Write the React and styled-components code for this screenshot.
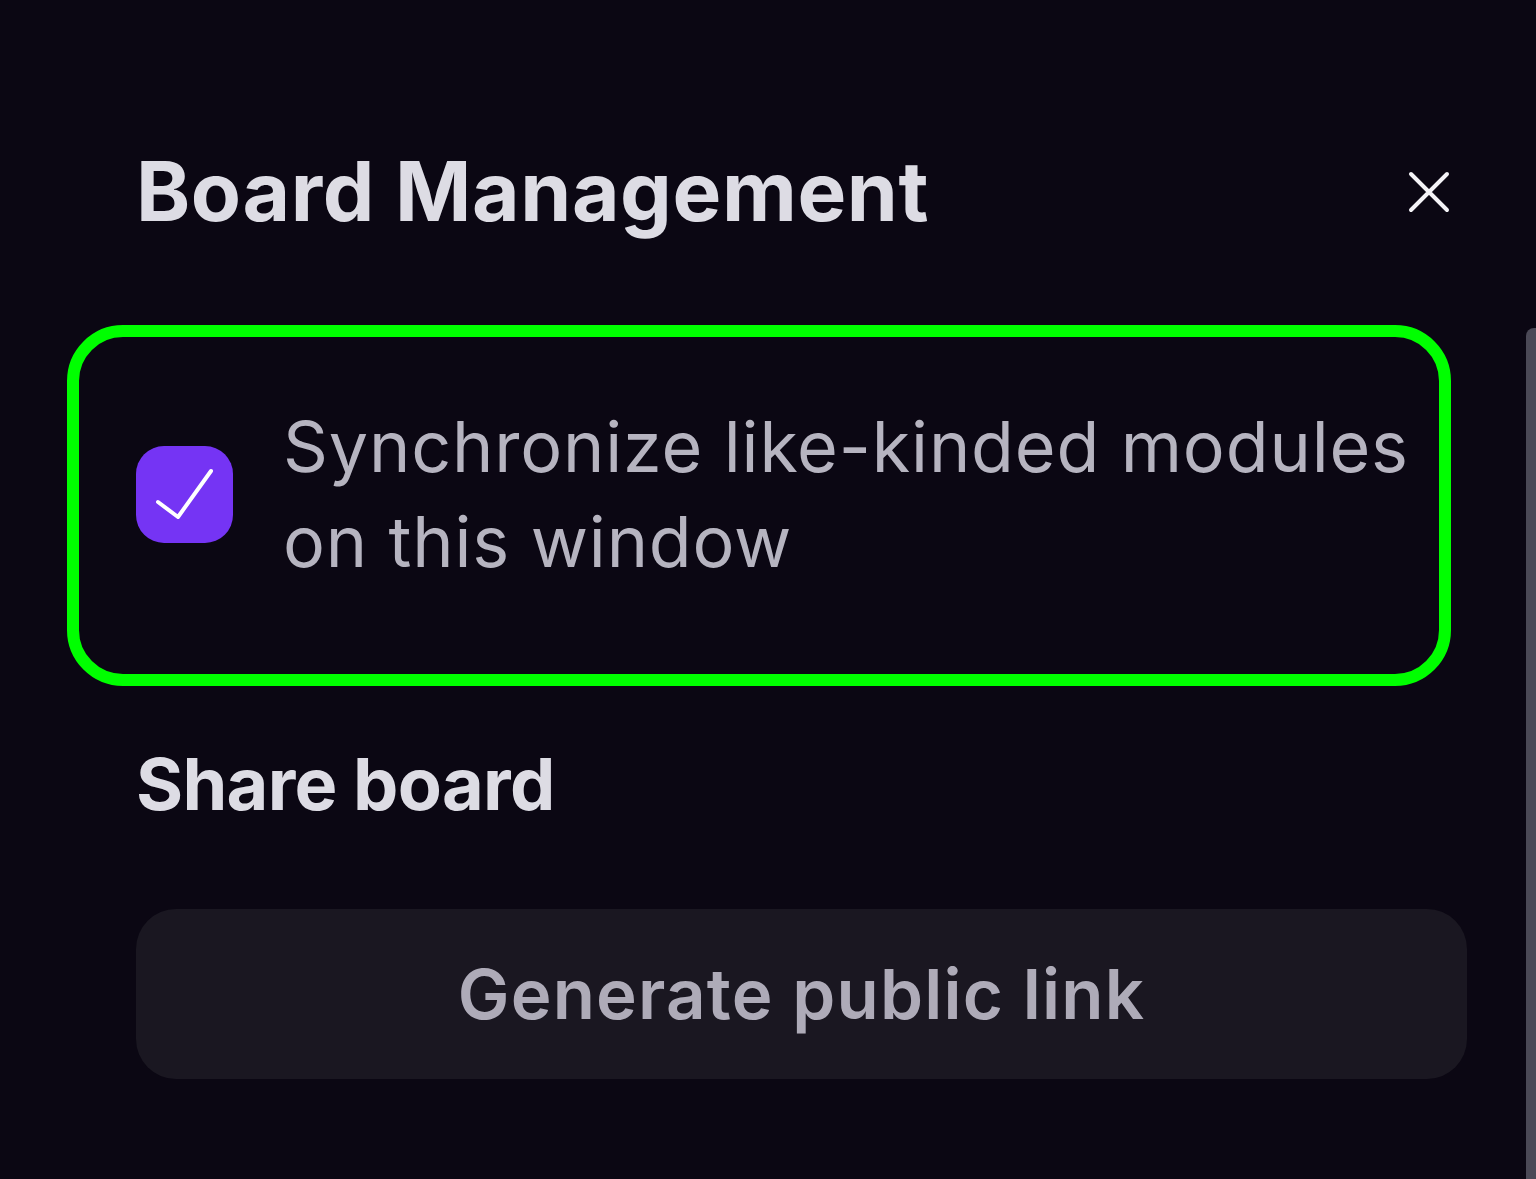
import React, { useState } from "react";
import styled, { createGlobalStyle } from "styled-components";

const GlobalStyle = createGlobalStyle`
  html, body {
    margin: 0;
    padding: 0;
    background: #0b0713;
    overflow: hidden;
  }
  body {
    font-family: Inter, "Noto Sans", sans-serif;
  }
`;

const Panel = styled.div`
  width: 1536px;
  height: 1179px;
  box-sizing: border-box;
  padding: 0 69px 0 136px;
  display: flex;
  flex-direction: column;
  background: #0b0713;
`;

const Header = styled.div`
  height: 100px;
  margin-top: 142px;
  display: flex;
  align-items: center;
  justify-content: space-between;
`;

const Title = styled.h1`
  margin: 0;
  font-size: 82px;
  line-height: 1;
  font-weight: 700;
  letter-spacing: 0.6px;
  color: #dddce4;
`;

const CloseButton = styled.button`
  width: 48px;
  height: 48px;
  margin-right: 14px;
  padding: 0;
  border: none;
  background: transparent;
  display: flex;
  align-items: center;
  justify-content: center;
  cursor: pointer;
`;

const SyncBox = styled.label`
  margin: 83px 0 0 -69px;
  width: 1384px;
  height: 361px;
  box-sizing: border-box;
  border: 12px solid #00ff00;
  border-radius: 56px;
  padding: 63px 20px 86px 57px;
  display: flex;
  align-items: center;
  gap: 50px;
  cursor: pointer;
`;

const Check = styled.span`
  flex: none;
  width: 97px;
  height: 97px;
  border-radius: 28px;
  background: ${(p) => (p.$checked ? "#7534f4" : "transparent")};
  border: ${(p) => (p.$checked ? "none" : "3px solid #6b6877")};
  box-sizing: border-box;
  display: flex;
  align-items: center;
  justify-content: center;
`;

const SyncText = styled.span`
  font-size: 70px;
  line-height: 95px;
  font-weight: 400;
  letter-spacing: 0.85px;
  color: #b6b4c0;
`;

const SectionTitle = styled.h2`
  margin: 62px 0 0;
  font-size: 72px;
  line-height: 1;
  font-weight: 700;
  letter-spacing: -0.7px;
  color: #dddce4;
`;

const LinkButton = styled.button`
  margin-top: 89px;
  width: 100%;
  height: 170px;
  border: none;
  border-radius: 40px;
  background: #1a1721;
  color: #aeabb8;
  font-family: Inter, "Noto Sans", sans-serif;
  font-size: 69px;
  font-weight: 600;
  letter-spacing: 1.2px;
  cursor: pointer;
`;

const ScrollThumb = styled.div`
  position: fixed;
  right: 0;
  top: 328px;
  bottom: -20px;
  width: 10px;
  border-radius: 8px 0 0 0;
  background: #4b4956;
`;

const App = () => {
  const [checked, setChecked] = useState(true);

  return (
    <>
      <GlobalStyle />
      <Panel>
        <Header>
          <Title>Board Management</Title>
          <CloseButton aria-label="Close">
            <svg width="44" height="44" viewBox="0 0 44 44">
              <path
                d="M4 4 L40 40 M40 4 L4 40"
                stroke="#f4f3f7"
                strokeWidth="4"
                strokeLinecap="round"
              />
            </svg>
          </CloseButton>
        </Header>

        <SyncBox onClick={() => setChecked(!checked)}>
          <Check $checked={checked}>
            {checked && (
              <svg width="97" height="97" viewBox="0 0 97 97">
                <path
                  d="M22 56 L42 71 L75 25"
                  fill="none"
                  stroke="#ffffff"
                  strokeWidth="4"
                  strokeLinecap="round"
                  strokeLinejoin="round"
                />
              </svg>
            )}
          </Check>
          <SyncText>Synchronize like-kinded modules on this window</SyncText>
        </SyncBox>

        <SectionTitle>Share board</SectionTitle>
        <LinkButton>Generate public link</LinkButton>
      </Panel>
      <ScrollThumb />
    </>
  );
};

export default App;
